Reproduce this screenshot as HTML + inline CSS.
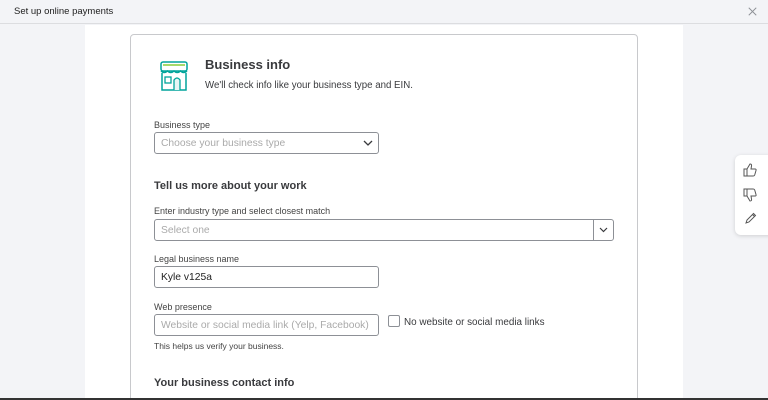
<!DOCTYPE html>
<html><head><style>
*{box-sizing:border-box;margin:0;padding:0}
html,body{width:768px;height:400px;overflow:hidden}
body{background:#f3f4f7;font-family:"Liberation Sans",Arial,sans-serif;position:relative;color:#393a3d}
.hdr{position:absolute;left:0;top:0;width:768px;height:24px;background:#f3f4f7;border-bottom:1px solid #dcdde0}
.hdr span{position:absolute;left:14px;top:6px;font-size:9.5px;color:#222}
.x{position:absolute;right:11px;top:7px;width:9px;height:9px}
.panel{position:absolute;left:85px;top:25px;width:598px;height:375px;background:#fff}
.card{position:absolute;left:130px;top:34px;width:508px;height:370px;border:1px solid #c8c9cc;border-radius:4px;background:#fff}
.t{position:absolute;white-space:nowrap}
.lbl{font-size:9px;color:#444}
.inp{position:absolute;border:1px solid #8d9096;border-radius:3px;height:22px;font-size:10.3px;color:#aaa;padding:5px 6px;background:#fff}
.h2{font-size:11px;font-weight:bold;color:#393a3d}
.fb{position:absolute;left:735px;top:155px;width:40px;height:80px;background:#fff;border-radius:6px;box-shadow:0 1px 4px rgba(0,0,0,.15)}
.bot{position:absolute;left:0;top:398px;width:768px;height:2px;background:#333}
</style></head><body>
<div class="hdr"><span>Set up online payments</span>
<svg class="x" viewBox="0 0 12 12"><path d="M1 1L11 11M11 1L1 11" stroke="#8d9096" stroke-width="1.2"/></svg></div>
<div class="panel"></div>
<div class="card"></div>
<svg style="position:absolute;left:159px;top:60px" width="30" height="32" viewBox="0 0 30 32">
<rect x="2" y="2" width="26" height="9" rx="2" fill="#fff" stroke="#00a49b" stroke-width="1.5"/>
<rect x="4" y="4" width="22" height="2" fill="#a6d96a"/>
<path d="M2 11q3 3 6.5 0q3 3 6.5 0q3 3 6.5 0q3 3 6.5 0" fill="none" stroke="#00a49b" stroke-width="1.5"/>
<path d="M3 13V30H27V13" fill="none" stroke="#00a49b" stroke-width="1.5"/>
<rect x="6" y="17" width="6" height="6" fill="none" stroke="#00a49b" stroke-width="1.3"/>
<path d="M15 30V20q3-4 6 0V30" fill="#e6f6f5" stroke="#00a49b" stroke-width="1.3"/>
</svg>
<div class="t" style="left:205px;top:57px;font-size:13px;font-weight:bold;color:#393a3d">Business info</div>
<div class="t" style="left:205px;top:80px;font-size:9.7px;color:#393a3d">We'll check info like your business type and EIN.</div>
<div class="t lbl" style="left:154px;top:120px">Business type</div>
<div class="inp" style="left:154px;top:132px;width:225px">Choose your business type</div>
<svg style="position:absolute;left:363px;top:140px" width="10" height="6"><path d="M1 1l4 4 4-4" fill="none" stroke="#393a3d" stroke-width="1.3"/></svg>
<div class="t h2" style="left:154px;top:180px">Tell us more about your work</div>
<div class="t lbl" style="left:154px;top:206px">Enter industry type and select closest match</div>
<div class="inp" style="left:154px;top:219px;width:460px">Select one</div>
<div style="position:absolute;left:593px;top:220px;width:1px;height:20px;background:#8d9096"></div>
<svg style="position:absolute;left:599px;top:227px" width="9" height="6"><path d="M1 1l3.5 3.5 3.5-3.5" fill="none" stroke="#393a3d" stroke-width="1.2"/></svg>
<div class="t lbl" style="left:154px;top:254px">Legal business name</div>
<div class="inp" style="left:154px;top:266px;width:225px;color:#222">Kyle v125a</div>
<div class="t lbl" style="left:154px;top:302px">Web presence</div>
<div class="inp" style="left:154px;top:314px;width:225px">Website or social media link (Yelp, Facebook)</div>
<div style="position:absolute;left:388px;top:315px;width:12px;height:12px;border:1px solid #8d9096;border-radius:2px"></div>
<div class="t" style="left:404px;top:317px;font-size:9.9px;color:#393a3d">No website or social media links</div>
<div class="t" style="left:154px;top:341px;font-size:8.5px;color:#444">This helps us verify your business.</div>
<div class="t h2" style="left:154px;top:377px">Your business contact info</div>
<div class="fb">
<svg style="position:absolute;left:8px;top:8px" width="14" height="14" viewBox="0 0 14 14"><path d="M1 6h3v7H1zM4 6l3-5q2 0 1.5 2L8 6h4q1.5 0 1 1.5l-1.3 4.5q-.4 1-1.5 1H4" fill="none" stroke="#555" stroke-width="1"/></svg>
<svg style="position:absolute;left:8px;top:33px" width="14" height="14" viewBox="0 0 14 14"><path d="M1 1h3v7H1zM4 8l3 5q2 0 1.5-2L8 8h4q1.5 0 1-1.5L11.7 2q-.4-1-1.5-1H4" fill="none" stroke="#555" stroke-width="1"/></svg>
<svg style="position:absolute;left:9px;top:57px" width="13" height="13" viewBox="0 0 13 13"><path d="M2 11l1-3 6.5-6.5 2 2L5 10zM8.5 2.5l2 2" fill="none" stroke="#555" stroke-width="1"/></svg>
</div>
<div class="bot"></div>
</body></html>
